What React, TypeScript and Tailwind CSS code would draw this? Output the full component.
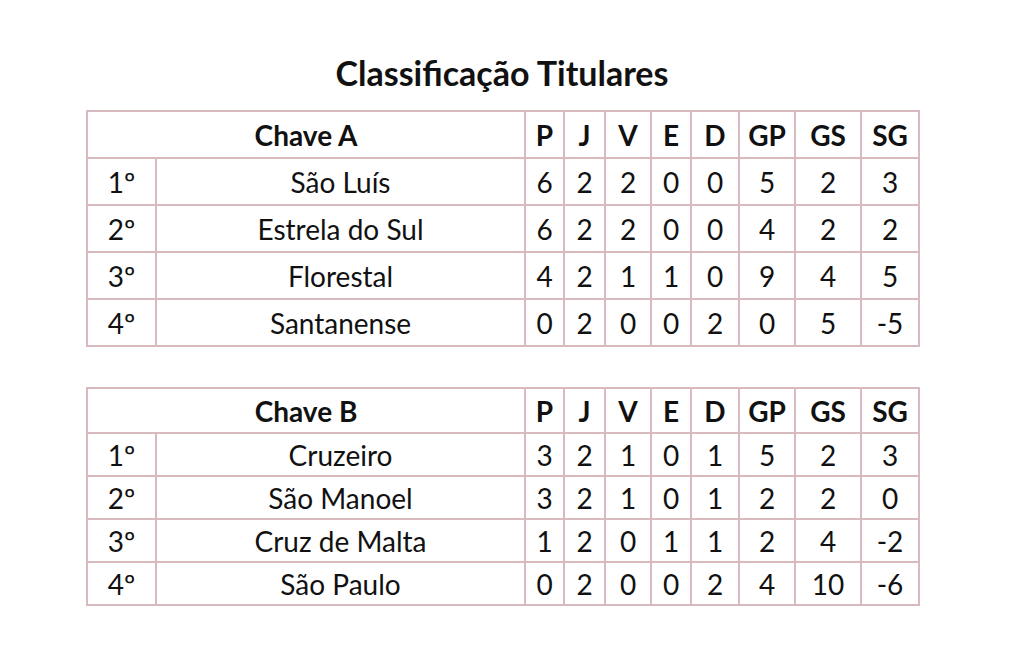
import React from "react"

type Row = [string, string, number, number, number, number, number, number, number, number]

const chaveA: Row[] = [
    ["1º", "São Luís", 6, 2, 2, 0, 0, 5, 2, 3],
    ["2º", "Estrela do Sul", 6, 2, 2, 0, 0, 4, 2, 2],
    ["3º", "Florestal", 4, 2, 1, 1, 0, 9, 4, 5],
    ["4º", "Santanense", 0, 2, 0, 0, 2, 0, 5, -5],
]

const chaveB: Row[] = [
    ["1º", "Cruzeiro", 3, 2, 1, 0, 1, 5, 2, 3],
    ["2º", "São Manoel", 3, 2, 1, 0, 1, 2, 2, 0],
    ["3º", "Cruz de Malta", 1, 2, 0, 1, 1, 2, 4, -2],
    ["4º", "São Paulo", 0, 2, 0, 0, 2, 4, 10, -6],
]

const stats = ["P", "J", "V", "E", "D", "GP", "GS", "SG"]
const cell = "border-2 border-[#d8b9bd] text-center p-0"

function Tabela({ titulo, rows, headH, rowH }: { titulo: string; rows: Row[]; headH: string; rowH: string }) {
    return (
        <table className="table-fixed border-collapse w-[832px]">
            <colgroup>
                <col className="w-[69px]" />
                <col className="w-[369px]" />
                <col className="w-[39px]" />
                <col className="w-[41px]" />
                <col className="w-[46px]" />
                <col className="w-[40px]" />
                <col className="w-[48px]" />
                <col className="w-[56px]" />
                <col className="w-[66px]" />
                <col className="w-[58px]" />
            </colgroup>
            <thead>
                <tr className={headH}>
                    <th colSpan={2} className={cell + " font-bold"}>{titulo}</th>
                    {stats.map((s) => (
                        <th key={s} className={cell + " font-bold"}>{s}</th>
                    ))}
                </tr>
            </thead>
            <tbody>
                {rows.map((r) => (
                    <tr key={r[0]} className={rowH}>
                        {r.map((v, i) => (
                            <td key={i} className={cell}>{v}</td>
                        ))}
                    </tr>
                ))}
            </tbody>
        </table>
    )
}

export default function App() {
    return (
        <div className="min-h-[647px] bg-white text-[#111] text-[28px] leading-[30px] font-['Lato','Open_Sans',sans-serif]">
            <div className="ml-[86px] w-[832px] pt-[53px]">
                <h1 className="text-center text-[34px] font-bold leading-[40px] mb-[17px]">
                    Classificação Titulares
                </h1>
                <Tabela titulo="Chave A" rows={chaveA} headH="h-[47px]" rowH="h-[47px]" />
                <div className="h-[40px]" />
                <Tabela titulo="Chave B" rows={chaveB} headH="h-[45px]" rowH="h-[43px]" />
            </div>
        </div>
    )
}
